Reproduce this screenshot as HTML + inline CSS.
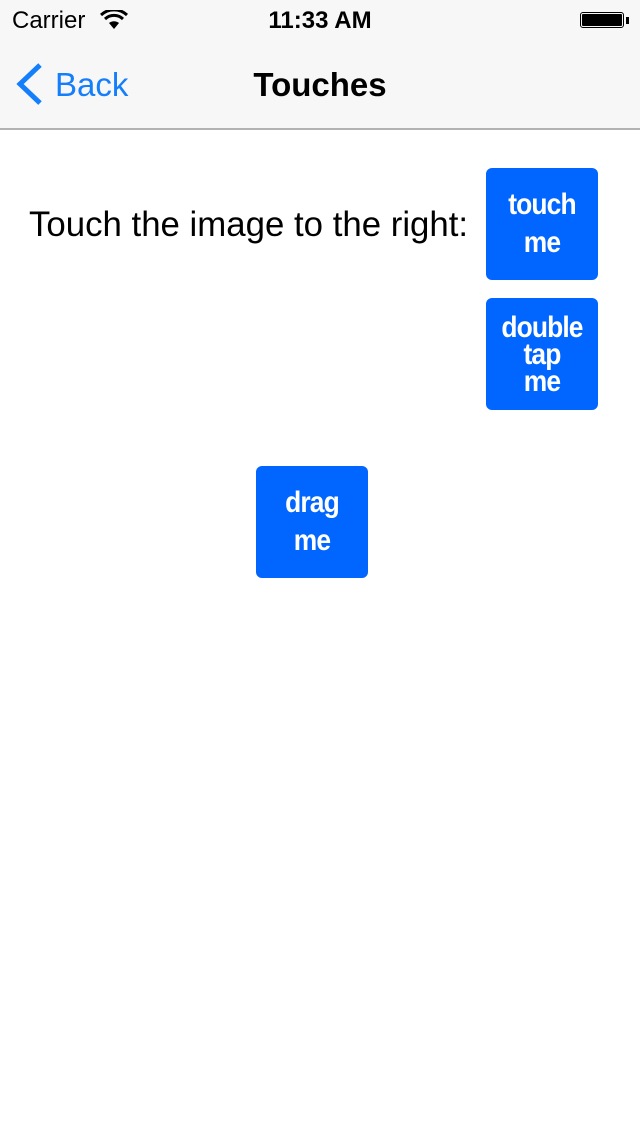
<!DOCTYPE html>
<html><head><style>
body{margin:0;width:640px;height:1136px;background:#fff;font-family:"Liberation Sans",sans-serif;position:relative;overflow:hidden}
.hdr{position:absolute;left:0;top:0;width:640px;height:128px;background:#f7f7f7;border-bottom:2px solid #b2b2b2}
.a{position:absolute}
.btn{position:absolute;width:112px;height:112px;background:#0066ff;border-radius:6px;color:#fff;font-weight:bold;text-align:center;display:flex;flex-direction:column;justify-content:center;letter-spacing:-1px}
.btn span{display:inline-block;transform:scaleX(0.88)}
</style></head><body>
<div class="hdr"></div>
<div class="a" style="left:12px;top:7px;font-size:24px">Carrier</div>
<svg class="a" style="left:100px;top:10px" width="28" height="20" viewBox="0 0 28 20"><path d="M14 19 L9 13 A8 8 0 0 1 19 13 Z" fill="#000"/><path d="M5 9 A13 13 0 0 1 23 9" stroke="#000" stroke-width="3" fill="none"/><path d="M1 5 A19 19 0 0 1 27 5" stroke="#000" stroke-width="3" fill="none"/></svg>
<div class="a" style="left:0;width:640px;text-align:center;top:7px;font-size:24px;font-weight:bold">11:33 AM</div>
<div class="a" style="left:580px;top:12px;width:44px;height:16px;border:1.5px solid #000;border-radius:3px;padding:1px;box-sizing:border-box"><div style="background:#000;width:100%;height:100%;border-radius:1px"></div></div>
<div class="a" style="left:626px;top:17px;width:3px;height:7px;background:#000"></div>
<svg class="a" style="left:14px;top:62px" width="30" height="44" viewBox="0 0 30 44"><path d="M26 3 L6 22 L26 41" stroke="#157efb" stroke-width="5" fill="none"/></svg>
<div class="a" style="left:55px;top:66px;font-size:33px;color:#157efb">Back</div>
<div class="a" style="left:0;width:640px;text-align:center;top:66px;font-size:33px;font-weight:bold">Touches</div>
<div class="a" style="left:29px;top:205px;font-size:34.8px">Touch the image to the right:</div>
<div class="btn" style="left:486px;top:168px;font-size:30px;line-height:38px"><span>touch</span><span>me</span></div>
<div class="btn" style="left:486px;top:298px;font-size:30px;line-height:27px"><span>double</span><span>tap</span><span>me</span></div>
<div class="btn" style="left:256px;top:466px;font-size:30px;line-height:38px"><span>drag</span><span>me</span></div>
</body></html>
